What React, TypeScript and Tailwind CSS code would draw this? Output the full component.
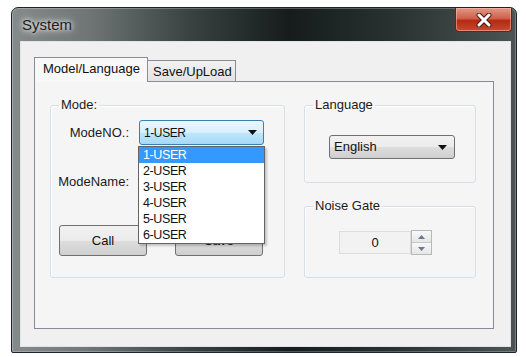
import { ReactNode } from 'react';

const FONT = "font-['Liberation_Sans',Arial,sans-serif]";

function Arrow({ className = '' }: { className?: string }) {
  return (
    <svg width="9" height="5" viewBox="0 0 9 5" className={className}>
      <path d="M0 0 H9 L4.5 5 Z" fill="#111" />
    </svg>
  );
}

function Group({ title, className, children }: { title: string; className: string; children?: ReactNode }) {
  return (
    <fieldset className={`rounded-[3px] border border-[#d9dee2] shadow-[inset_1px_1px_0_#ffffff] ${className}`}>
      <legend className="ml-[8px] px-[2px] text-[13px] leading-[16px] text-[#1a1a1a]">{title}</legend>
      {children}
    </fieldset>
  );
}

const users = ['1-USER', '2-USER', '3-USER', '4-USER', '5-USER', '6-USER'];

export default function App() {
  return (
    <div className={`w-[526px] h-[357px] bg-white pt-[7px] pl-[11px] ${FONT}`}>
      {/* window frame */}
      <div className="w-[506px] h-[346px] flex flex-col rounded-t-[7px] rounded-b-[2px] border border-[#1b2530] bg-[linear-gradient(90deg,#858a8a_0%,#707676_15%,#3a4242_35%,#161c1c_55%,#283030_75%,#4c5454_100%)] shadow-[inset_0_0_0_1px_rgba(255,255,255,0.25)]">
        {/* title bar */}
        <div className="h-[33px] flex items-start justify-between shrink-0">
          <span className="pl-[10px] pt-[8px] text-[15px] leading-[18px] text-[#1c1c1c] [text-shadow:0_0_8px_#ffffff,0_0_4px_#ffffff]">
            System
          </span>
          <div className="mr-[4px] w-[57px] h-[24px] flex items-center justify-center rounded-b-[4px] border border-[#5a2a20] border-t-0 bg-[linear-gradient(180deg,#e09a86_0%,#d0604a_45%,#b42a12_55%,#c64a30_100%)] shadow-[inset_0_0_0_1px_rgba(255,200,190,0.5)]">
            <svg width="16" height="14" viewBox="0 0 16 14">
              <path d="M3 2 L13 12 M13 2 L3 12" stroke="#4a1a10" strokeWidth="5" strokeLinecap="round" />
              <path d="M3 2 L13 12 M13 2 L3 12" stroke="#ffffff" strokeWidth="3" strokeLinecap="round" />
            </svg>
          </div>
        </div>

        {/* client area */}
        <div className="flex-1 ml-[8px] mr-[5px] mb-[5px] border border-[#dfe4e8] bg-[#f0f0f0] pt-[15px] pl-[13px] pr-[16px] pb-[17px] flex flex-col">
          {/* tab strip */}
          <div className="flex items-end h-[24px] relative z-10">
            <div className="h-[25px] w-[114px] border border-[#898c95] border-b-0 bg-[#f8f8f8] pl-[8px] pt-[3px] text-[13px] leading-[16px] text-[#111] -mb-px">
              Model/Language
            </div>
            <div className="h-[21px] w-[88px] border border-[#898c95] border-l-0 border-b-0 bg-[linear-gradient(180deg,#f2f2f2,#e3e3e3)] pl-[5px] pt-[3px] text-[13px] leading-[16px] text-[#111]">
              Save/UpLoad
            </div>
          </div>

          {/* tab panel */}
          <div className="flex-1 border border-[#898c95] bg-[#f5f5f5] pt-[15px] pl-[15px] flex gap-[19px]">
            <Group title="Mode:" className="w-[235px] h-[181px] relative">
              <div className="grid grid-cols-[78px_125px] gap-x-[10px] items-center mt-[7px]">
                <span className="text-right text-[13px] text-[#1a1a1a]">ModeNO.:</span>
                <div className="h-[25px] rounded-[3px] border border-[#3c7fb1] bg-[linear-gradient(180deg,#eaf6fd_0%,#d9f0fc_50%,#bee6fd_51%,#a7d9f5_100%)] flex items-center justify-between pl-[4px] pr-[6px]">
                  <span className="text-[12px] tracking-[-0.4px] text-[#111]">1-USER</span>
                  <Arrow />
                </div>
                <span className="text-right text-[13px] text-[#1a1a1a] mt-[25px]">ModeName:</span>
                <div className="h-[23px] mt-[25px] border border-[#abadb3] bg-white" />
              </div>
              <div className="flex gap-[28px] ml-[8px] mt-[32px]">
                <button className="w-[88px] h-[31px] rounded-[3px] border border-[#707070] bg-[linear-gradient(180deg,#f2f2f2_0%,#ebebeb_50%,#dddddd_51%,#cfcfcf_100%)] text-[13px] text-[#111]">
                  Call
                </button>
                <button className="w-[88px] h-[31px] rounded-[3px] border border-[#707070] bg-[linear-gradient(180deg,#f2f2f2_0%,#ebebeb_50%,#dddddd_51%,#cfcfcf_100%)] text-[13px] text-[#111]">
                  Save
                </button>
              </div>

              {/* open dropdown list */}
              <div className="absolute left-[87px] top-[33px] w-[127px] border border-[#646464] bg-white shadow-[2px_2px_2px_rgba(0,0,0,0.2)] flex flex-col">
                {users.map((u, i) => (
                  <div
                    key={u}
                    className={`h-[16px] pl-[4px] text-[12.5px] leading-[16px] tracking-[-0.4px] ${i === 0 ? 'bg-[#3399ff] text-white' : 'text-[#111]'}`}
                  >
                    {u}
                  </div>
                ))}
              </div>
            </Group>

            <div className="flex flex-col gap-[15px]">
              <Group title="Language" className="w-[172px] h-[86px]">
                <div className="mt-[22px] ml-[24px] w-[126px] h-[24px] rounded-[3px] border border-[#707070] bg-[linear-gradient(180deg,#f2f2f2_0%,#ebebeb_50%,#dddddd_51%,#cfcfcf_100%)] flex items-center justify-between pl-[4px] pr-[7px]">
                  <span className="text-[13px] text-[#111]">English</span>
                  <Arrow />
                </div>
              </Group>
              <Group title="Noise Gate" className="w-[172px] h-[80px]">
                <div className="mt-[16px] ml-[34px] flex items-center">
                  <div className="w-[72px] h-[23px] border border-[#dcdcdc] bg-[#f2f2f2] flex items-center justify-center text-[13px] text-[#111]">
                    0
                  </div>
                  <div className="w-[21px] h-[25px] border border-[#b8b8b8] flex flex-col">
                    <div className="flex-1 flex items-center justify-center bg-[linear-gradient(180deg,#f8f8f8,#e6e6e6)] border-b border-[#c8c8c8]">
                      <svg width="7" height="4" viewBox="0 0 7 4"><path d="M0 4 L3.5 0 L7 4 Z" fill="#6a7890" /></svg>
                    </div>
                    <div className="flex-1 flex items-center justify-center bg-[linear-gradient(180deg,#f8f8f8,#e6e6e6)]">
                      <svg width="7" height="4" viewBox="0 0 7 4"><path d="M0 0 H7 L3.5 4 Z" fill="#6a7890" /></svg>
                    </div>
                  </div>
                </div>
              </Group>
            </div>
          </div>
        </div>
      </div>
    </div>
  );
}
